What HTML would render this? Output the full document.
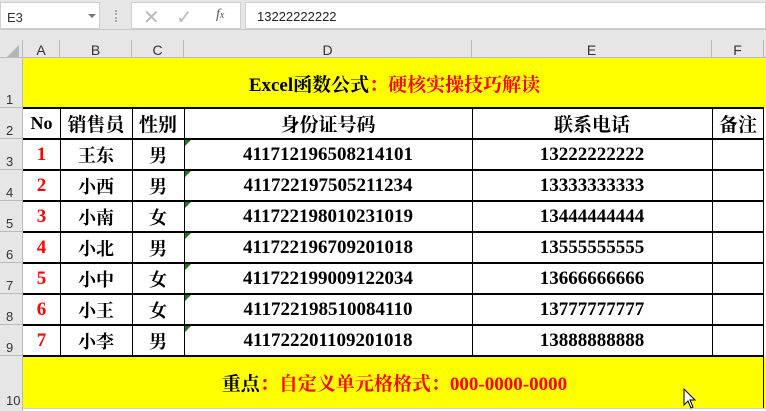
<!DOCTYPE html>
<html><head><meta charset="utf-8"><style>
*{margin:0;padding:0;box-sizing:border-box}
body{width:766px;height:411px;overflow:hidden;background:#e6e6e6;position:relative;font-family:"Liberation Serif","Noto Serif CJK SC",serif}
.a{position:absolute}
.hl{position:absolute;background:#000;height:2px}
.vl{position:absolute;background:#000;width:1px}
.c{position:absolute;display:flex;align-items:center;justify-content:center;font-weight:bold;color:#000;white-space:nowrap}
.z{font-family:"Noto Serif CJK SC","Liberation Serif",serif;font-weight:bold;font-size:18px}
.r{color:#f00}
.rh{position:absolute;left:0;width:23px;font:13px "Liberation Sans",sans-serif;color:#333;padding-left:6px;display:flex;align-items:flex-end;border-bottom:1px solid #bbb;background:#e6e6e6}
.ch{position:absolute;top:40px;height:18px;font:14px "Liberation Sans",sans-serif;color:#333;text-align:center;line-height:20px;border-right:1px solid #bbb}
.tri{position:absolute;width:0;height:0;border-top:6px solid #1e7a1e;border-right:6px solid transparent}
</style></head><body>
<div class="a" style="left:0;top:0;width:766px;height:30px;background:#e6e6e6;border-bottom:1px solid #c8c8c8"></div>
<div class="a" style="left:0;top:2px;width:100px;height:27px;background:#fff;border:1px solid #d0d0d0;font:13px 'Liberation Sans',sans-serif;color:#333;padding:7px 0 0 6px">E3</div>
<div class="a" style="left:88px;top:14px;width:0;height:0;border-left:4px solid transparent;border-right:4px solid transparent;border-top:4px solid #777"></div>
<div class="a" style="left:115px;top:10px;width:2px;height:12px;border-left:2px dotted #aaa"></div>
<div class="a" style="left:131px;top:2px;width:110px;height:27px;background:#fff;border:1px solid #d0d0d0"></div>
<div class="a" style="left:143px;top:5px;font:20px 'Liberation Sans',sans-serif;color:#bbb">✕</div>
<div class="a" style="left:176px;top:5px;font:20px 'DejaVu Sans',sans-serif;color:#bbb">✓</div>
<div class="a" style="left:216px;top:7px;font:italic 14px 'Liberation Serif',serif;color:#555">f<span style="font-size:10px">x</span></div>
<div class="a" style="left:245px;top:2px;width:521px;height:27px;background:#fff;border:1px solid #d0d0d0;font:13px 'Liberation Sans',sans-serif;color:#222;padding:6px 0 0 11px">13222222222</div>
<div class="a" style="left:0;top:40px;width:23px;height:18px;background:#e6e6e6;border-right:1px solid #bbb"></div>
<div class="a" style="left:7px;top:45px;width:0;height:0;border-left:12px solid transparent;border-bottom:12px solid #b5b5b5"></div>
<div class="ch" style="left:23px;width:37px">A</div>
<div class="ch" style="left:60px;width:72px">B</div>
<div class="ch" style="left:132px;width:52px">C</div>
<div class="ch" style="left:184px;width:288px">D</div>
<div class="ch" style="left:472px;width:240px">E</div>
<div class="ch" style="left:712px;width:52px">F</div>
<div class="a" style="left:0;top:57px;width:766px;height:1px;background:#bbb"></div>
<div class="rh" style="top:58px;height:50px">1</div>
<div class="rh" style="top:108px;height:31px">2</div>
<div class="rh" style="top:139px;height:31px">3</div>
<div class="rh" style="top:170px;height:31px">4</div>
<div class="rh" style="top:201px;height:31px">5</div>
<div class="rh" style="top:232px;height:31px">6</div>
<div class="rh" style="top:263px;height:31px">7</div>
<div class="rh" style="top:294px;height:31px">8</div>
<div class="rh" style="top:325px;height:31px">9</div>
<div class="rh" style="top:356px;height:52px;border-bottom:none">10</div>
<div class="a" style="left:22px;top:58px;width:1px;height:353px;background:#bbb"></div>
<div class="a" style="left:23px;top:58px;width:743px;height:353px;background:#fff"></div>
<div class="a" style="left:23px;top:58px;width:743px;height:50px;background:#ff0"></div>
<div class="a" style="left:23px;top:357px;width:743px;height:51px;background:#ff0"></div>
<div class="a" style="left:23px;top:408px;width:743px;height:1px;background:#d0d0d0"></div>
<div class="c" style="left:23px;top:58px;width:743px;height:50px;font-size:19px">Excel函数公式<span class="r">：硬核实操技巧解读</span></div>
<div class="c" style="left:23px;top:357px;width:743px;height:51px;font-size:19px">重点<span class="r">：自定义单元格格式：000-0000-0000</span></div>
<div class="hl" style="left:23px;top:107px;width:741px"></div>
<div class="hl" style="left:23px;top:138px;width:741px"></div>
<div class="hl" style="left:23px;top:169px;width:741px"></div>
<div class="hl" style="left:23px;top:200px;width:741px"></div>
<div class="hl" style="left:23px;top:231px;width:741px"></div>
<div class="hl" style="left:23px;top:262px;width:741px"></div>
<div class="hl" style="left:23px;top:293px;width:741px"></div>
<div class="hl" style="left:23px;top:324px;width:741px"></div>
<div class="hl" style="left:23px;top:355px;width:741px"></div>
<div class="vl" style="left:60px;top:108px;height:248px"></div>
<div class="vl" style="left:132px;top:108px;height:248px"></div>
<div class="vl" style="left:184px;top:108px;height:248px"></div>
<div class="vl" style="left:472px;top:108px;height:248px"></div>
<div class="vl" style="left:712px;top:108px;height:248px"></div>
<div class="vl" style="left:763px;top:108px;height:248px"></div>
<div class="a" style="left:763px;top:357px;width:1px;height:51px;background:#000"></div>
<div class="c" style="left:23px;top:109px;width:37px;height:29px;font-size:18px">No</div>
<div class="c z" style="left:60px;top:109px;width:72px;height:29px;font-size:19px">销售员</div>
<div class="c z" style="left:132px;top:109px;width:52px;height:29px;font-size:19px">性别</div>
<div class="c z" style="left:184px;top:109px;width:288px;height:29px;font-size:19px">身份证号码</div>
<div class="c z" style="left:472px;top:109px;width:240px;height:29px;font-size:19px">联系电话</div>
<div class="c z" style="left:712px;top:109px;width:52px;height:29px;font-size:19px">备注</div>

<div class="c r" style="left:23px;top:140px;width:37px;height:29px;font-size:19px">1</div>
<div class="c z" style="left:60px;top:140px;width:72px;height:29px">王东</div>
<div class="c z" style="left:132px;top:140px;width:52px;height:29px">男</div>
<div class="c" style="left:184px;top:140px;width:288px;height:29px;font-size:19px">411712196508214101</div>
<div class="c" style="left:472px;top:140px;width:240px;height:29px;font-size:19px">13222222222</div>

<div class="c r" style="left:23px;top:171px;width:37px;height:29px;font-size:19px">2</div>
<div class="c z" style="left:60px;top:171px;width:72px;height:29px">小西</div>
<div class="c z" style="left:132px;top:171px;width:52px;height:29px">男</div>
<div class="c" style="left:184px;top:171px;width:288px;height:29px;font-size:19px">411722197505211234</div>
<div class="c" style="left:472px;top:171px;width:240px;height:29px;font-size:19px">13333333333</div>

<div class="c r" style="left:23px;top:202px;width:37px;height:29px;font-size:19px">3</div>
<div class="c z" style="left:60px;top:202px;width:72px;height:29px">小南</div>
<div class="c z" style="left:132px;top:202px;width:52px;height:29px">女</div>
<div class="c" style="left:184px;top:202px;width:288px;height:29px;font-size:19px">411722198010231019</div>
<div class="c" style="left:472px;top:202px;width:240px;height:29px;font-size:19px">13444444444</div>

<div class="c r" style="left:23px;top:233px;width:37px;height:29px;font-size:19px">4</div>
<div class="c z" style="left:60px;top:233px;width:72px;height:29px">小北</div>
<div class="c z" style="left:132px;top:233px;width:52px;height:29px">男</div>
<div class="c" style="left:184px;top:233px;width:288px;height:29px;font-size:19px">411722196709201018</div>
<div class="c" style="left:472px;top:233px;width:240px;height:29px;font-size:19px">13555555555</div>

<div class="c r" style="left:23px;top:264px;width:37px;height:29px;font-size:19px">5</div>
<div class="c z" style="left:60px;top:264px;width:72px;height:29px">小中</div>
<div class="c z" style="left:132px;top:264px;width:52px;height:29px">女</div>
<div class="c" style="left:184px;top:264px;width:288px;height:29px;font-size:19px">411722199009122034</div>
<div class="c" style="left:472px;top:264px;width:240px;height:29px;font-size:19px">13666666666</div>

<div class="c r" style="left:23px;top:295px;width:37px;height:29px;font-size:19px">6</div>
<div class="c z" style="left:60px;top:295px;width:72px;height:29px">小王</div>
<div class="c z" style="left:132px;top:295px;width:52px;height:29px">女</div>
<div class="c" style="left:184px;top:295px;width:288px;height:29px;font-size:19px">411722198510084110</div>
<div class="c" style="left:472px;top:295px;width:240px;height:29px;font-size:19px">13777777777</div>

<div class="c r" style="left:23px;top:326px;width:37px;height:29px;font-size:19px">7</div>
<div class="c z" style="left:60px;top:326px;width:72px;height:29px">小李</div>
<div class="c z" style="left:132px;top:326px;width:52px;height:29px">男</div>
<div class="c" style="left:184px;top:326px;width:288px;height:29px;font-size:19px">411722201109201018</div>
<div class="c" style="left:472px;top:326px;width:240px;height:29px;font-size:19px">13888888888</div>
<div class="tri" style="left:185px;top:140px"></div>
<div class="tri" style="left:185px;top:171px"></div>
<div class="tri" style="left:185px;top:202px"></div>
<div class="tri" style="left:185px;top:233px"></div>
<div class="tri" style="left:185px;top:264px"></div>
<div class="tri" style="left:185px;top:295px"></div>
<div class="tri" style="left:185px;top:326px"></div>
<svg class="a" style="left:683px;top:388px" width="14" height="22" viewBox="0 0 14 22"><path d="M1 1 L1 17 L5 13 L8 20 L10 19 L7 12 L12 12 Z" fill="#fff" stroke="#000" stroke-width="1"/></svg>
</body></html>
